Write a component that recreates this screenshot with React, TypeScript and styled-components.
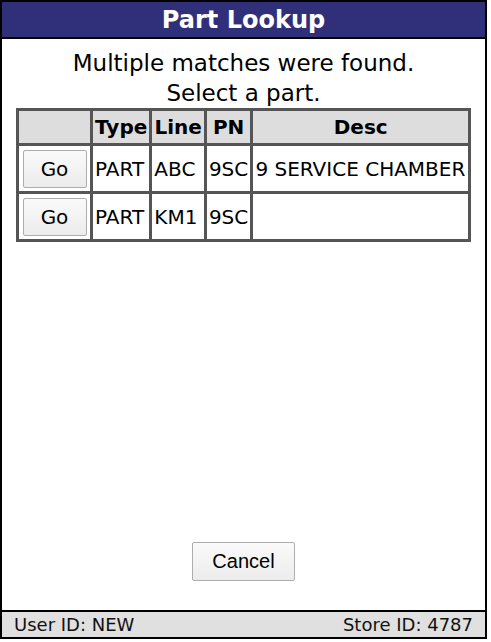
import styled, { createGlobalStyle } from "styled-components";

type Part = {
    type: string,
    line: string,
    pn: string,
    desc: string
}

const parts: Part[] = [
    { type: "PART", line: "ABC", pn: "9SC", desc: "9 SERVICE CHAMBER" },
    { type: "PART", line: "KM1", pn: "9SC", desc: "" },
];

const GlobalStyle = createGlobalStyle`
    html, body {
        margin: 0;
        padding: 0;
        background: white;
    }
    body {
        font-family: "DejaVu Sans", Verdana, sans-serif;
    }
`

const App = () => {
    return (
        <>
            <GlobalStyle />
            <Frame>
                <Header>Part Lookup</Header>
                <Content>
                    <Message>
                        Multiple matches were found.<br />
                        Select a part.
                    </Message>
                    <Table>
                        <thead>
                            <tr>
                                <HeadCell style={{ width: 67 }}></HeadCell>
                                <HeadCell>Type</HeadCell>
                                <HeadCell>Line</HeadCell>
                                <HeadCell>PN</HeadCell>
                                <HeadCell>Desc</HeadCell>
                            </tr>
                        </thead>
                        <tbody>
                            {parts.map((p, i) => (
                                <tr key={i}>
                                    <ButtonCell><GoButton>Go</GoButton></ButtonCell>
                                    <Cell>{p.type}</Cell>
                                    <Cell>{p.line}</Cell>
                                    <Cell>{p.pn}</Cell>
                                    <Cell>{p.desc}</Cell>
                                </tr>
                            ))}
                        </tbody>
                    </Table>
                    <Spacer />
                    <CancelButton>Cancel</CancelButton>
                </Content>
                <Footer>
                    <span>User ID: NEW</span>
                    <span>Store ID: 4787</span>
                </Footer>
            </Frame>
        </>
    );
}

const Frame = styled.div`
    width: 487px;
    height: 639px;
    box-sizing: border-box;
    border: 2px solid #000;
    display: flex;
    flex-direction: column;
`
const Header = styled.div`
    height: 35px;
    background: #2f3079;
    border-bottom: 2px solid #000;
    color: white;
    font-weight: bold;
    font-size: 24px;
    display: flex;
    align-items: center;
    justify-content: center;
`
const Content = styled.div`
    flex: 1;
    display: flex;
    flex-direction: column;
    align-items: center;
    padding: 9px 14px 29px;
`
const Message = styled.div`
    font-size: 23px;
    line-height: 30px;
    text-align: center;
    color: #000;
    margin-bottom: 0;
`
const Table = styled.table`
    width: 455px;
    border-collapse: collapse;
    border: 3px solid #555;
    font-size: 20px;
`
const HeadCell = styled.th`
    background: #dddddd;
    border: 3px solid #555;
    height: 32px;
    padding: 0 2px;
    font-weight: bold;
`
const Cell = styled.td`
    border: 3px solid #555;
    height: 45px;
    padding: 0 2px;
    white-space: nowrap;
`
const ButtonCell = styled(Cell)`
    padding: 0 2px;
    text-align: center;
`
const GoButton = styled.button`
    width: 64px;
    height: 38px;
    font-family: "DejaVu Sans", sans-serif;
    font-size: 20px;
    background: linear-gradient(#fafafa, #ececec);
    border: 1px solid #adadad;
    border-radius: 2px;
`
const Spacer = styled.div`
    flex: 1;
`
const CancelButton = styled.button`
    width: 103px;
    height: 39px;
    font-family: "Liberation Sans", Arial, sans-serif;
    font-size: 20px;
    background: linear-gradient(#fafafa, #ececec);
    border: 1px solid #adadad;
    border-radius: 2px;
`
const Footer = styled.div`
    height: 25px;
    background: #e0e0e0;
    border-top: 2px solid #000;
    display: flex;
    justify-content: space-between;
    align-items: center;
    padding: 0 12px;
    font-size: 18px;
    color: #111;
`

export default App;
